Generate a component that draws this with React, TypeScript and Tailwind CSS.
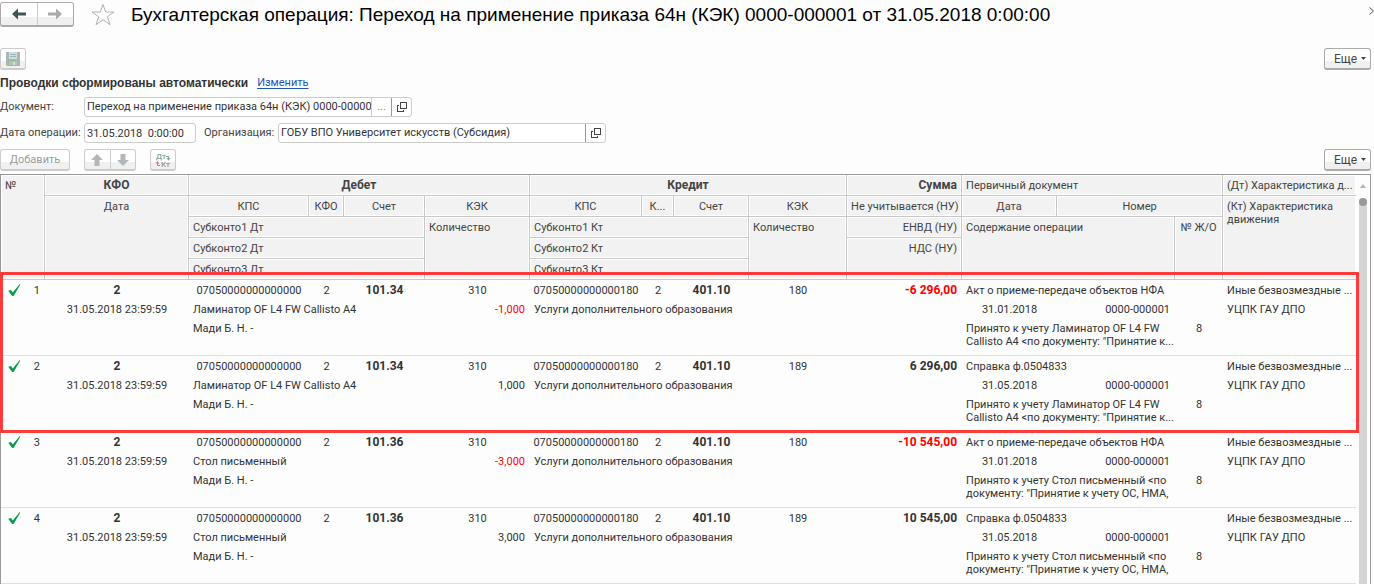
import type { ReactNode } from "react";
import { clsx } from "clsx";

interface Entry {
  id: number;
  debitAccount: string;
  kek: string;
  asset: string;
  quantity: string;
  creditKek: string;
  sum: string;
  documentName: string;
  documentDate: string;
  description: string[];
}

const LAMINATOR = "Ламинатор OF L4 FW Callisto A4";
const LAMINATOR_NOTE = ["Принято к учету Ламинатор OF L4 FW", "Callisto A4 <по документу: \"Принятие к..."];
const TABLE_NOTE = ["Принято к учету Стол письменный <по", "документу: \"Принятие к учету ОС, НМА,"];
const ACT = "Акт о приеме-передаче объектов НФА";
const REFERENCE = "Справка ф.0504833";

const entries: Entry[] = [
  {
    id: 1,
    debitAccount: "101.34",
    kek: "310",
    asset: LAMINATOR,
    quantity: "-1,000",
    creditKek: "180",
    sum: "-6 296,00",
    documentName: ACT,
    documentDate: "31.01.2018",
    description: LAMINATOR_NOTE,
  },
  {
    id: 2,
    debitAccount: "101.34",
    kek: "310",
    asset: LAMINATOR,
    quantity: "1,000",
    creditKek: "189",
    sum: "6 296,00",
    documentName: REFERENCE,
    documentDate: "31.05.2018",
    description: LAMINATOR_NOTE,
  },
  {
    id: 3,
    debitAccount: "101.36",
    kek: "310",
    asset: "Стол письменный",
    quantity: "-3,000",
    creditKek: "180",
    sum: "-10 545,00",
    documentName: ACT,
    documentDate: "31.01.2018",
    description: TABLE_NOTE,
  },
  {
    id: 4,
    debitAccount: "101.36",
    kek: "310",
    asset: "Стол письменный",
    quantity: "3,000",
    creditKek: "189",
    sum: "10 545,00",
    documentName: REFERENCE,
    documentDate: "31.05.2018",
    description: TABLE_NOTE,
  },
];

const buttonFace =
  "bg-linear-to-b from-white from-65% to-[#f0f0f0] to-65% border border-b-2 rounded-[3px] flex items-center";

function ArrowIcon({ className }: { className?: string }) {
  return (
    <svg viewBox="0 0 14 12" className={clsx("h-3 w-[14px]", className)} fill="currentColor">
      <path d="M0 6 6 0.5V4.5H14V7.5H6V11.5Z" />
    </svg>
  );
}

function OpenIcon() {
  return (
    <svg viewBox="0 0 10 10" className="size-[10px]" fill="none" stroke="#444" shapeRendering="crispEdges">
      <path d="M3.5 0.5H9.5V6.5H3.5Z" />
      <path d="M2 3.5H0.5V9.5H6.5V8" />
    </svg>
  );
}

function SaveIcon() {
  return (
    <svg viewBox="0 0 14 14" className="size-[14px]">
      <path d="M0 0H14V14H1L0 13Z" fill="#a9b5b9" />
      <path d="M3 0H11V7H3Z" fill="#cfdedd" />
      <path d="M4 2.5H10M4 4.5H10" stroke="#9bb5b8" />
      <path d="M2.5 8.5H11.5V13.5H2.5Z" fill="#b4c1ba" stroke="#9dba9f" />
      <path d="M7 10H9V13H7Z" fill="#d5ddd8" />
    </svg>
  );
}

function CheckIcon() {
  return (
    <svg viewBox="0 0 13 13" className="size-[13px]" fill="#0a9b4a">
      <path d="M0.2 6.7 3 6 4.7 8.5 11.8 0.1 12.2 0.7 5.6 11.9H4.2Z" />
    </svg>
  );
}

function MoreButton() {
  return (
    <button type="button" className={clsx(buttonFace, "h-[22px] w-[47px] justify-between border-[#aaa] pr-1 pl-[9px] text-[12px] text-[#444]")}>
      Еще
      <svg viewBox="0 0 5 3" className="h-[3px] w-[5px]" fill="#444">
        <path d="M0 0H5L2.5 3Z" />
      </svg>
    </button>
  );
}

function FieldButton({ label, children, dark }: { label: string; children: ReactNode; dark?: boolean }) {
  return (
    <button
      type="button"
      aria-label={label}
      className={clsx("flex w-5 items-center justify-center border-l", dark ? "border-[#999]" : "border-[#ccc] text-[#888]")}
    >
      {children}
    </button>
  );
}

interface HeadProps {
  children: ReactNode;
  colSpan?: number;
  rowSpan?: number;
  className?: string;
}

function Head({ children, colSpan, rowSpan, className }: HeadProps) {
  return (
    <th
      colSpan={colSpan}
      rowSpan={rowSpan}
      className={clsx(
        "overflow-hidden border-r border-b border-[#c8c8c8] bg-[#f2f2f2] px-1 pt-1 align-top leading-[13px] whitespace-nowrap text-[#444] shadow-[inset_1px_1px_0_#fff,inset_-1px_-1px_0_#fff] last:border-r-0",
        className ?? "text-center font-normal",
      )}
    >
      {children}
    </th>
  );
}

const left = "text-left font-normal";
const right = "text-right font-normal";

function EntryRows({ entry }: { entry: Entry }) {
  const negative = entry.sum.startsWith("-");

  return (
    <tbody className="text-center leading-[13px] whitespace-nowrap text-[#333]">
      <tr className="h-5">
        <td>
          <div className="flex items-center justify-between pr-[5px] pl-[7px]">
            <CheckIcon />
            {entry.id}
          </div>
        </td>
        <td className="text-[12px] font-bold">2</td>
        <td>07050000000000000</td>
        <td>2</td>
        <td className="text-[12px] font-bold">{entry.debitAccount}</td>
        <td>{entry.kek}</td>
        <td>07050000000000180</td>
        <td>2</td>
        <td className="text-[12px] font-bold">401.10</td>
        <td>{entry.creditKek}</td>
        <td className={clsx("pr-[5px] text-right text-[12px] font-bold", negative && "text-[#f00]")}>{entry.sum}</td>
        <td colSpan={3} className="pl-1 text-left">{entry.documentName}</td>
        <td className="pl-1 text-left">Иные безвозмездные ...</td>
      </tr>
      <tr className="h-[19px]">
        <td />
        <td>31.05.2018 23:59:59</td>
        <td colSpan={3} className="pl-1 text-left">{entry.asset}</td>
        <td className={clsx("pr-[5px] text-right", negative && "text-[#f00]")}>{entry.quantity}</td>
        <td colSpan={3} className="pl-1 text-left">Услуги дополнительного образования</td>
        <td />
        <td />
        <td>{entry.documentDate}</td>
        <td className="pr-[5px] text-right">0000-000001</td>
        <td />
        <td className="pl-1 text-left">УЦПК ГАУ ДПО</td>
      </tr>
      <tr className="h-[37px] align-top *:border-b *:border-[#e0e0e0] *:pt-[3px]">
        <td />
        <td />
        <td colSpan={3} className="pl-1 text-left">Мади Б. Н. -</td>
        <td />
        <td colSpan={3} />
        <td />
        <td />
        <td colSpan={2} className="pl-1 text-left">
          {entry.description[0]}
          <br />
          {entry.description[1]}
        </td>
        <td>8</td>
        <td />
      </tr>
    </tbody>
  );
}

function PostingsTable() {
  return (
    <table className="w-full table-fixed border-separate border-spacing-0">
      <colgroup>
        <col className="w-[44px]" />
        <col className="w-[144px]" />
        <col className="w-[120px]" />
        <col className="w-[35px]" />
        <col className="w-[81px]" />
        <col className="w-[105px]" />
        <col className="w-[112px]" />
        <col className="w-[32px]" />
        <col className="w-[75px]" />
        <col className="w-[98px]" />
        <col className="w-[115px]" />
        <col className="w-[95px]" />
        <col className="w-[118px]" />
        <col className="w-[48px]" />
        <col />
      </colgroup>
      <thead>
        <tr className="h-[21px]">
          <Head rowSpan={5} className={left}>№</Head>
          <Head className="text-center text-[12px] font-bold">КФО</Head>
          <Head colSpan={4} className="text-center text-[12px] font-bold">Дебет</Head>
          <Head colSpan={4} className="text-center text-[12px] font-bold">Кредит</Head>
          <Head className="text-right text-[12px] font-bold">Сумма</Head>
          <Head colSpan={3} className={left}>Первичный документ</Head>
          <Head className={left}>(Дт) Характеристика д...</Head>
        </tr>
        <tr className="h-[21px]">
          <Head rowSpan={4}>Дата</Head>
          <Head>КПС</Head>
          <Head>КФО</Head>
          <Head>Счет</Head>
          <Head>КЭК</Head>
          <Head>КПС</Head>
          <Head>К...</Head>
          <Head>Счет</Head>
          <Head>КЭК</Head>
          <Head className={right}>Не учитывается (НУ)</Head>
          <Head>Дата</Head>
          <Head colSpan={2}>Номер</Head>
          <Head rowSpan={4} className={left}>
            (Кт) Характеристика
            <br />
            движения
          </Head>
        </tr>
        <tr className="h-[21px]">
          <Head colSpan={3} className={left}>Субконто1 Дт</Head>
          <Head rowSpan={3} className={left}>Количество</Head>
          <Head colSpan={3} className={left}>Субконто1 Кт</Head>
          <Head rowSpan={3} className={left}>Количество</Head>
          <Head className={right}>ЕНВД (НУ)</Head>
          <Head colSpan={2} rowSpan={3} className={left}>Содержание операции</Head>
          <Head rowSpan={3} className="border-r! text-center font-normal">№ Ж/О</Head>
        </tr>
        <tr className="h-[21px]">
          <Head colSpan={3} className={left}>Субконто2 Дт</Head>
          <Head colSpan={3} className={left}>Субконто2 Кт</Head>
          <Head rowSpan={2} className="border-r! text-right font-normal">НДС (НУ)</Head>
        </tr>
        <tr className="h-[21px]">
          <Head colSpan={3} className={left}>Субконто3 Дт</Head>
          <Head colSpan={3} className="border-r! text-left font-normal">Субконто3 Кт</Head>
        </tr>
      </thead>
      {entries.map((entry) => (
        <EntryRows key={entry.id} entry={entry} />
      ))}
    </table>
  );
}

export default function App() {
  return (
    <div className="flex h-screen flex-col overflow-hidden bg-[#fdfdfd] font-['Roboto','Liberation_Sans',sans-serif] text-[11px] leading-4 text-[#444]">
      <header className="flex items-center pt-[2px]">
        <div className={clsx(buttonFace, "h-[25px] w-[74px] border-[#aaa]")}>
          <button type="button" aria-label="Назад" className="flex h-full flex-1 items-center justify-center border-r border-[#ccc] text-[#3e5557]">
            <ArrowIcon />
          </button>
          <button type="button" aria-label="Вперед" className="flex h-full flex-1 items-center justify-center text-[#aaa]">
            <ArrowIcon className="rotate-180" />
          </button>
        </div>
        <button type="button" aria-label="В избранное" className="ml-[17px]">
          <svg viewBox="0 0 24 23" className="h-[23px] w-6" fill="none" stroke="#aab2b8">
            <path d="M12 1.5 14.7 9H23L16.3 13.8 19 21.7 12 16.8 5 21.7 7.7 13.8 1 9H9.3Z" />
          </svg>
        </button>
        <h1 className="ml-4 flex-1 font-['Liberation_Sans',Arial,sans-serif] text-[19px] leading-6 text-black">
          Бухгалтерская операция: Переход на применение приказа 64н (КЭК) 0000-000001 от 31.05.2018 0:00:00
        </h1>
        <button type="button" aria-label="Закрыть" className="-mt-2 overflow-hidden">
          <svg viewBox="0 0 5 8" className="h-2 w-[5px]" fill="none" stroke="#3e5557">
            <path d="M0.5 0.5 4.5 4 0.5 7.5" />
          </svg>
        </button>
      </header>

      <div className="mt-[21px] flex items-center justify-between pr-[3px]">
        <button type="button" aria-label="Записать" className={clsx(buttonFace, "h-[22px] w-[26px] justify-center border-[#ccc]")}>
          <SaveIcon />
        </button>
        <MoreButton />
      </div>

      <div className="mt-[5px] flex items-center gap-[9px]">
        <strong className="font-['Liberation_Sans',Arial,sans-serif] text-[12px] text-[#333]">Проводки сформированы автоматически</strong>
        <a href="#edit" className="text-[#1d55b5] underline underline-offset-2">Изменить</a>
      </div>

      <div className="mt-[6px] flex items-center">
        <label htmlFor="document" className="w-[84px]">Документ:</label>
        <div className="flex h-5 w-[328px] rounded-[3px] border border-[#ccc] bg-white">
          <input id="document" defaultValue="Переход на применение приказа 64н (КЭК) 0000-00000" className="min-w-0 flex-1 pl-[2px] text-[#333] outline-none" />
          <FieldButton label="Выбрать">...</FieldButton>
          <FieldButton label="Открыть документ" dark>
            <OpenIcon />
          </FieldButton>
        </div>
      </div>

      <div className="mt-[6px] flex items-center">
        <label htmlFor="date" className="w-[84px] whitespace-nowrap">Дата операции:</label>
        <input id="date" defaultValue="31.05.2018  0:00:00" className="h-5 w-[112px] rounded-[3px] border border-[#ccc] bg-white pl-[2px] text-[#333] outline-none" />
        <label htmlFor="organization" className="ml-2 w-[74px] whitespace-nowrap">Организация:</label>
        <div className="flex h-5 w-[328px] rounded-[3px] border border-[#ccc] bg-white">
          <input id="organization" defaultValue="ГОБУ ВПО Университет искусств (Субсидия)" className="min-w-0 flex-1 pl-[2px] text-[#333] outline-none" />
          <FieldButton label="Открыть организацию" dark>
            <OpenIcon />
          </FieldButton>
        </div>
      </div>

      <div className="mt-[6px] flex items-center pr-[3px]">
        <button type="button" className={clsx(buttonFace, "h-[22px] w-[70px] justify-center border-[#ccc] text-[#999]")}>
          Добавить
        </button>
        <div className={clsx(buttonFace, "ml-[14px] h-[22px] w-[52px] border-[#ccc] text-[#b0b8bb]")}>
          <button type="button" aria-label="Переместить вверх" className="flex h-full flex-1 items-center justify-center border-r border-[#ccc]">
            <svg viewBox="0 0 12 12" className="size-3" fill="currentColor">
              <path d="M6 0 12 6H8.5V12H3.5V6H0Z" />
            </svg>
          </button>
          <button type="button" aria-label="Переместить вниз" className="flex h-full flex-1 items-center justify-center">
            <svg viewBox="0 0 12 12" className="size-3 rotate-180" fill="currentColor">
              <path d="M6 0 12 6H8.5V12H3.5V6H0Z" />
            </svg>
          </button>
        </div>
        <button type="button" aria-label="Дебет и кредит" className={clsx(buttonFace, "ml-[14px] h-[22px] w-[26px] justify-center border-[#ccc]")}>
          <svg viewBox="0 0 16 17" className="h-[17px] w-4 font-['Roboto',sans-serif] text-[8px] font-medium">
            <text x="1" y="8" fill="#8b9f95">Дт</text>
            <text x="6" y="16" fill="#a8968f">Кт</text>
            <path d="M11 5.5H13.5V8" fill="none" stroke="#7fa58e" />
            <path d="M11.5 7H15.5L13.5 9.5Z" fill="#7fa58e" />
            <path d="M5 14.5H2.5V12" fill="none" stroke="#b0827a" />
            <path d="M0.5 12.5H4.5L2.5 10Z" fill="#b0827a" />
          </svg>
        </button>
        <div className="ml-auto">
          <MoreButton />
        </div>
      </div>

      <main className="relative mt-[3px] mr-[3px] flex flex-1 border border-b-0 border-[#999]">
        <div className="min-w-0 flex-1">
          <PostingsTable />
        </div>
        <div className="flex w-[14px] flex-col items-center">
          <svg viewBox="0 0 6 4" className="mt-[9px] h-1 w-[6px] shrink-0" fill="#b5b5b5">
            <path d="M3 0 6 4H0Z" />
          </svg>
          <div className="mt-[10px] w-2 flex-1 rounded-t-full bg-[#d4d4d4]">
            <div className="size-2 rounded-full bg-[#999]" />
          </div>
        </div>
        {/* frame around the first two postings */}
        <div className="pointer-events-none absolute top-[97px] right-[11px] -left-px h-[161px] border-3 border-[#ff3a3a]" />
      </main>
    </div>
  );
}
